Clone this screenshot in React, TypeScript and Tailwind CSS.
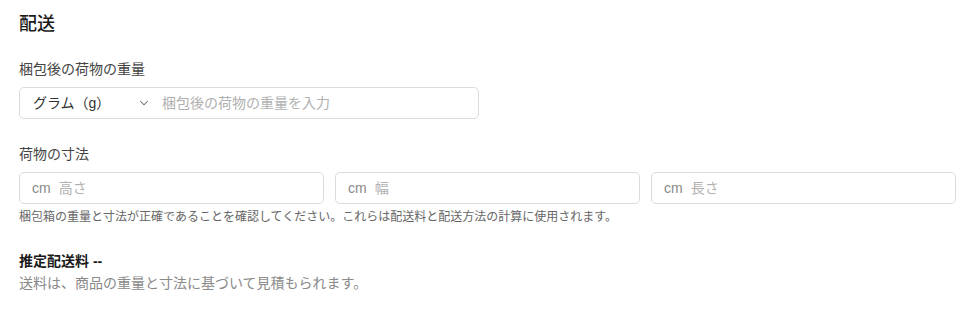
import { ChevronDown } from 'lucide-react';

const font = { fontFamily: '"Liberation Sans", "Noto Sans CJK JP", sans-serif' };

function DimInput({ label }: { label: string }) {
  return (
    <div className="flex-1 h-[32px] flex items-center gap-2 px-[12px] border border-[#dcdcdc] rounded-[5px] text-[14px]">
      <span className="text-[#8a8a8a]">cm</span>
      <input
        className="flex-1 min-w-0 outline-none bg-transparent placeholder:text-[#b0b0b0]"
        placeholder={label}
      />
    </div>
  );
}

export default function App() {
  return (
    <div className="bg-white w-[971px] h-[335px] pl-[19px] pr-[15px] pt-[10px]" style={font}>
      <h2 className="text-[18px] leading-[28px] font-medium text-[#1a1a1a]">配送</h2>

      {/* Weight */}
      <div className="mt-[21px]">
        <p className="text-[14px] leading-[20px] text-[#444]">梱包後の荷物の重量</p>
        <div className="mt-[8px] w-[460px] h-[32px] flex items-center border border-[#dcdcdc] rounded-[5px] text-[14px]">
          <div className="w-[136px] flex items-center justify-between pl-[13px] pr-[5px] text-[#333]">
            <span>グラム（g）</span>
            <ChevronDown className="w-[14px] h-[14px] text-[#666]" strokeWidth={1.75} />
          </div>
          <input
            className="flex-1 min-w-0 pl-[6px] outline-none bg-transparent placeholder:text-[#b0b0b0]"
            placeholder="梱包後の荷物の重量を入力"
          />
        </div>
      </div>

      {/* Dimensions */}
      <div className="mt-[25px]">
        <p className="text-[14px] leading-[20px] text-[#444]">荷物の寸法</p>
        <div className="mt-[8px] flex gap-[11px]">
          <DimInput label="高さ" />
          <DimInput label="幅" />
          <DimInput label="長さ" />
        </div>
        <p className="mt-[4px] text-[12px] leading-[18px] text-[#666]">
          梱包箱の重量と寸法が正確であることを確認してください。これらは配送料と配送方法の計算に使用されます。
        </p>
      </div>

      {/* Estimate */}
      <div className="mt-[25px]">
        <p className="text-[14px] leading-[20px] font-bold text-[#1a1a1a]">推定配送料 --</p>
        <p className="text-[14px] leading-[20px] text-[#8a8a8a] mt-[2px]">
          送料は、商品の重量と寸法に基づいて見積もられます。
        </p>
      </div>
    </div>
  );
}
